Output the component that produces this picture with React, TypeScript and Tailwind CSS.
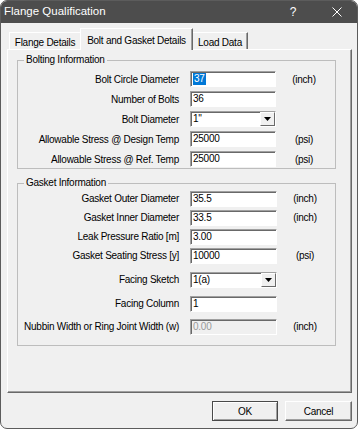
import type { ReactNode } from "react";

const font = "font-['Liberation_Sans',Arial,sans-serif]";

const sunken =
  "border border-t-[#a0a0a0] border-l-[#a0a0a0] border-r-white border-b-white shadow-[inset_1px_1px_0_#696969]";

const TextBox = ({
  value,
  width = "w-[86px]",
  selected = false,
  disabled = false,
}: {
  value: string;
  width?: string;
  selected?: boolean;
  disabled?: boolean;
}) => (
  <div
    className={`${width} h-[16px] ${sunken} ${
      disabled ? "bg-[#f0f0f0] text-[#9a9a9a]" : "bg-white text-black"
    } flex items-center pl-[2px]`}
  >
    {selected ? (
      <span className="bg-[#0078d7] text-white px-[1px] leading-[12px]">{value}</span>
    ) : (
      <span className="leading-[12px]">{value}</span>
    )}
  </div>
);

const ComboBox = ({ value, width = "w-[86px]" }: { value: string; width?: string }) => (
  <div className={`${width} h-[16px] ${sunken} bg-white flex items-center`}>
    <span className="flex-1 pl-[2px] leading-[12px]">{value}</span>
    <div className="w-[15px] h-full bg-[#f0f0f0] border border-t-white border-l-white border-r-[#696969] border-b-[#696969] flex items-center justify-center">
      <svg width="7" height="4" viewBox="0 0 7 4">
        <path d="M0 0h7L3.5 4z" fill="#000" />
      </svg>
    </div>
  </div>
);

const Row = ({
  label,
  children,
  unit,
  h = "h-[20px]",
  extra = "",
}: {
  label: string;
  children: ReactNode;
  unit?: string;
  h?: string;
  extra?: string;
}) => (
  <div className={`flex items-center ${h} ${extra}`}>
    <div className="w-[161px] text-right whitespace-nowrap">{label}</div>
    <div className="ml-[11px]">{children}</div>
    <div className="w-[56px] text-center">{unit}</div>
  </div>
);

const Group = ({
  title,
  children,
  className,
}: {
  title: string;
  children: ReactNode;
  className: string;
}) => (
  <fieldset className={`w-[319px] border border-[#bdbdbd] ${className}`}>
    <legend className="ml-[6px] px-[2px] leading-[12px]">{title}</legend>
    {children}
  </fieldset>
);

export default function App() {
  return (
    <div className={`w-[358px] h-[429px] bg-[#f0f0f0] rounded-[7px] border border-[#5c5c5c] overflow-hidden flex flex-col text-[10px] tracking-[-0.25px] text-black ${font}`}>
      {/* title bar */}
      <div className="h-[22px] bg-[#4d4d4d] text-white flex items-center pl-[3px] shrink-0 tracking-normal">
        <span className="text-[11.5px] flex-1">Flange Qualification</span>
        <span className="text-[12px] w-[10px] text-center mr-[34px]">?</span>
        <svg width="10" height="10" viewBox="0 0 10 10" className="mr-[15px]">
          <path d="M0.5 0.5l9 9M9.5 0.5l-9 9" stroke="#fff" strokeWidth="1" />
        </svg>
      </div>

      {/* tabs */}
      <div className="h-[26px] flex items-end pl-[8px] shrink-0">
        <div className="w-[71px] h-[17px] border-t border-l border-white flex items-center justify-center pt-[2px]">
          Flange Details
        </div>
        <div className="relative z-10 -mb-px w-[113px] h-[22px] bg-[#f0f0f0] border-t border-l border-white border-r border-r-[#696969] shadow-[inset_-1px_0_0_#a0a0a0] flex items-start justify-center pt-[4px]">
          Bolt and Gasket Details
        </div>
        <div className="w-[55px] h-[17px] border-t border-t-white border-r border-r-[#696969] shadow-[inset_-1px_0_0_#a0a0a0] flex items-center justify-center pt-[2px]">
          Load Data
        </div>
      </div>

      {/* tab panel */}
      <div className="ml-[6px] w-[345px] h-[344px] shrink-0 border border-t-white border-l-white border-r-[#696969] border-b-[#696969] shadow-[inset_-1px_-1px_0_#a0a0a0] pl-[9px] pt-[4px]">
        <Group title="Bolting Information" className="h-[115px]">
          <div className="pt-[3px]">
            <Row label="Bolt Circle Diameter" unit="(inch)">
              <TextBox value="37" selected />
            </Row>
            <Row label="Number of Bolts">
              <TextBox value="36" />
            </Row>
            <Row label="Bolt Diameter">
              <ComboBox value="1''" />
            </Row>
            <Row label="Allowable Stress @ Design Temp" unit="(psi)">
              <TextBox value="25000" />
            </Row>
            <Row label="Allowable Stress @ Ref. Temp" unit="(psi)">
              <TextBox value="25000" />
            </Row>
          </div>
        </Group>

        <Group title="Gasket Information" className="h-[169px] mt-[8px]">
          <Row label="Gasket Outer Diameter" unit="(inch)" h="h-[19px]">
            <TextBox value="35.5" width="w-[87px]" />
          </Row>
          <Row label="Gasket Inner Diameter" unit="(inch)" h="h-[19px]">
            <TextBox value="33.5" width="w-[87px]" />
          </Row>
          <Row label="Leak Pressure Ratio [m]" h="h-[19px]">
            <TextBox value="3.00" width="w-[87px]" />
          </Row>
          <Row label="Gasket Seating Stress [y]" unit="(psi)" h="h-[19px]">
            <TextBox value="10000" width="w-[87px]" />
          </Row>
          <Row label="Facing Sketch" h="h-[19px]" extra="mt-[5px]">
            <ComboBox value="1(a)" width="w-[87px]" />
          </Row>
          <Row label="Facing Column" h="h-[19px]" extra="mt-[5px]">
            <TextBox value="1" width="w-[87px]" />
          </Row>
          <Row label="Nubbin Width or Ring Joint Width (w)" unit="(inch)" h="h-[19px]" extra="mt-[4px]">
            <TextBox value="0.00" width="w-[87px]" disabled />
          </Row>
        </Group>
      </div>

      {/* buttons */}
      <div className="flex justify-end gap-[7px] pt-[8px] pr-[5px]">
        <button className="w-[66px] h-[20px] bg-[#f0f0f0] border border-[#4a4a4a] shadow-[inset_1px_1px_0_#fff,inset_-1px_-1px_0_#a0a0a0]">
          OK
        </button>
        <button className="w-[67px] h-[20px] bg-[#f0f0f0] border border-t-white border-l-white border-r-[#696969] border-b-[#696969] shadow-[inset_-1px_-1px_0_#a0a0a0]">
          Cancel
        </button>
      </div>
    </div>
  );
}
